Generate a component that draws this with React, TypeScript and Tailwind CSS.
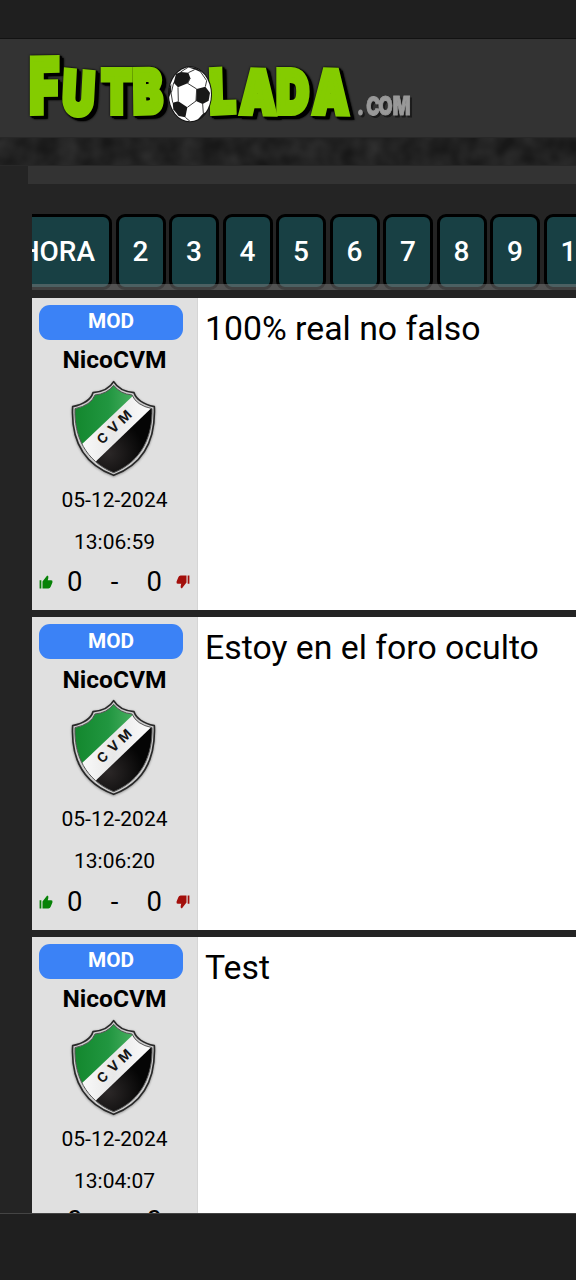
import React from "react";

const posts = [
  { time: "13:06:59", message: "100% real no falso" },
  { time: "13:06:20", message: "Estoy en el foro oculto" },
  { time: "13:04:07", message: "Test" },
];

const pages = ["2", "3", "4", "5", "6", "7", "8", "9", "10"];

function Ball() {
  return (
    <g transform="translate(160 60) scale(.33333)">
      <ellipse cx="90" cy="103" rx="66" ry="84" fill="#111" />
      <ellipse cx="90" cy="103" rx="63" ry="81" fill="#fff" />
      <g fill="#181818">
        <path d="M48 42 62 36 85 38 91 54 83 70 54 82 41 68Z" />
        <path d="M110 87 136 80 150 98 146 122 128 132 108 123Z" />
        <path d="M38 128 55 124 82 142 76 172 56 168 40 148Z" />
        <path d="M84 22Q112 20 126 38L108 30Z" />
        <path d="M27 84 34 72 33 98 27 112Z" />
        <path d="M112 180 130 160 140 156Q130 174 112 180Z" />
      </g>
      <path d="M85 38 104 29M122 36 140 62 136 80M91 54 83 70 110 87M54 82 55 124M110 87 108 123 82 142M34 98 41 68M33 98 38 128M128 132 130 160M76 172 90 184M62 36 84 22" fill="none" stroke="#3b3b3b" strokeWidth="3" />
    </g>
  );
}

function Logo() {
  return (
    <svg className="block h-[98px] w-[440px]" viewBox="0 39 440 98">
      <g className="[filter:drop-shadow(0_0_1px_#000)_drop-shadow(2px_2px_0_#000)_drop-shadow(2px_1px_0_#000)]" fontFamily="Inter, sans-serif" fontWeight="900" fill="#84cc00" stroke="#84cc00" strokeWidth="6" strokeLinejoin="miter">
        <text transform="translate(29.5 113) skewY(-1) scale(.67 1)" fontSize="75">F</text>
        <text transform="translate(61 113) scale(.74 1)" fontSize="59" x="1 55 98" rotate="4 0 -1">UTB</text>
        <text transform="translate(209.5 113) scale(.76 1)" fontSize="59" x="1 40 88 136" rotate="-2 1 0 1">LADA</text>
      </g>
      <g className="drop-shadow-[2px_2px_0px_#1a1a1a]" fontFamily="Inter, sans-serif" fontWeight="900" fill="#999" stroke="#999" strokeWidth="1">
        <text transform="translate(357 114.5) scale(.73 1)" fontSize="25.5" x="0 12 29 49" rotate="0 4 0 0">.COM</text>
      </g>
      <Ball />
    </svg>
  );
}

const OUTER = "M161 20Q178 49 222 53 232 83 283 95C287 190 254 266 161 301 68 266 33 190 38 95Q90 83 99 53 144 49 161 20Z";
const INNER = "M161 31Q181 57 216 60 229 91 276 101C278 183 246 258 161 293 76 258 42 183 45 101Q93 91 105 60 141 57 161 31Z";

function Shield() {
  return (
    <svg className="block size-[105px] shrink-0" viewBox="0 0 315 315">
      <defs>
        <clipPath id="crest"><path d={INNER} /></clipPath>
        <linearGradient id="green" x1="0" y1="0" x2="1" y2="0">
          <stop stopColor="#11852b" />
          <stop offset=".5" stopColor="#219640" />
          <stop offset="1" stopColor="#5cbb70" />
        </linearGradient>
        <linearGradient id="silver">
          <stop stopColor="#fff" />
          <stop offset=".5" stopColor="#e8e8e8" />
          <stop offset="1" stopColor="#fff" />
        </linearGradient>
        <radialGradient id="black" cx=".35" cy=".65" r=".45">
          <stop stopColor="#2c2828" />
          <stop offset="1" stopColor="#050505" />
        </radialGradient>
      </defs>
      <path className="drop-shadow-[0px_2px_3px_#888]" d={OUTER} fill="#ccc" stroke="#292929" strokeWidth="5" strokeLinejoin="round" />
      <g clipPath="url(#crest)">
        <path d="M30 15H290V305H30Z" fill="url(#silver)" />
        <path d="M30 15H261L216 65 76 198 30 240Z" fill="url(#green)" />
        <path d="M290 84 112 255 60 315H300Z" fill="url(#black)" />
      </g>
      <path d={INNER} fill="none" stroke="#555" strokeWidth="3" />
      <text transform="translate(127 210) rotate(-44)" x="0 46 89" fontFamily="Inter, sans-serif" fontWeight="700" fontSize="40" fill="#161616">CVM</text>
    </svg>
  );
}

function Thumb({ down = false }: { down?: boolean }) {
  return (
    <svg viewBox="0 0 24 24" className={down ? "size-[14px] -scale-100 fill-[#a30f0b]" : "size-[14px] fill-[#078207]"}>
      <path d="M1 9h3v14H1zM6 23V11l8-10q3 1 2 4l-1 4h6q3 0 2 4l-3 7q-1 3-4 3z" />
    </svg>
  );
}

function Post({ time, message }: { time: string; message: string }) {
  return (
    <article className="flex h-[312.5px] shrink-0 bg-white text-black">
      <div className="flex w-[166px] shrink-0 flex-col items-center border-r border-[#d5d5d5] bg-[#e0e0e0] pt-[7px]">
        <div className="ml-[7px] flex h-[35px] w-[144px] shrink-0 items-center justify-center self-start rounded-[11px] bg-[#3b82f6] text-[20.8px] font-bold text-white">MOD</div>
        <div className="flex h-[35px] shrink-0 items-center pt-[7px] text-[24.6px] font-bold">NicoCVM</div>
        <div className="mr-[5px] shrink-0"><Shield /></div>
        <div className="flex h-[42px] shrink-0 items-center text-[21px]">05-12-2024</div>
        <div className="flex h-[42px] shrink-0 items-center text-[21px]">{time}</div>
        <div className="flex h-[37px] w-full shrink-0 items-center justify-between px-[7px] text-[27.5px]">
          <Thumb />
          <div className="flex w-[95px] items-center justify-between"><span>0</span><span>-</span><span>0</span></div>
          <Thumb down />
        </div>
      </div>
      <p className="pt-[11px] pl-[7px] text-[33.8px] leading-[40px] whitespace-nowrap">{message}</p>
    </article>
  );
}

export default function App() {
  return (
    <div className="flex h-[1280px] w-[576px] flex-col overflow-hidden bg-[#242424] font-['Roboto',sans-serif]">
      <div className="h-[39px] shrink-0 border-b border-[#121212] bg-[#1f1f1f]" />
      <header className="h-[98px] shrink-0 bg-[#333]"><Logo /></header>
      <div className="h-[29px] shrink-0 border-y border-[#282828] bg-[#181818]">
        <svg className="block h-full w-full opacity-20">
          <filter id="grain" x="0" y="0" width="100%" height="100%">
            <feTurbulence type="fractalNoise" baseFrequency=".05" numOctaves="2" seed="4" />
            <feColorMatrix values="0 0 0 0 .25  0 0 0 0 .25  0 0 0 0 .25  1.5 0 0 0 -.3" />
          </filter>
          <rect width="100%" height="100%" filter="url(#grain)" />
        </svg>
      </div>
      <div className="ml-[28px] h-[18px] shrink-0 bg-[#333]" />
      <main className="mt-[30px] ml-8 flex h-[999px] shrink-0 flex-col overflow-hidden">
        <nav className="grid h-[76px] shrink-0 overflow-hidden">
          <div className="col-start-1 row-start-1 -ml-[31px] flex gap-[3.5px] text-[28px] font-medium text-white">
            <div className="flex h-[76px] w-[111px] shrink-0 items-center justify-end rounded-[9px] border-[3px] border-black bg-[#184044] pr-[14px]">AHORA</div>
            {pages.map((page) => (
              <div key={page} className="flex h-[76px] min-w-[50px] shrink-0 items-center justify-center rounded-[9px] border-[3px] border-black bg-[#184044] px-[14px]">{page}</div>
            ))}
          </div>
          <div className="z-10 col-start-1 row-start-1 h-[6px] self-end bg-[#808080]/50" />
        </nav>
        <div className="mt-[7.5px] flex flex-col gap-[7px]">
          {posts.map((post) => <Post key={post.time} {...post} />)}
        </div>
      </main>
      <footer className="h-[67px] shrink-0 border-t border-[#444] bg-[#1f1f1f]" />
    </div>
  );
}
